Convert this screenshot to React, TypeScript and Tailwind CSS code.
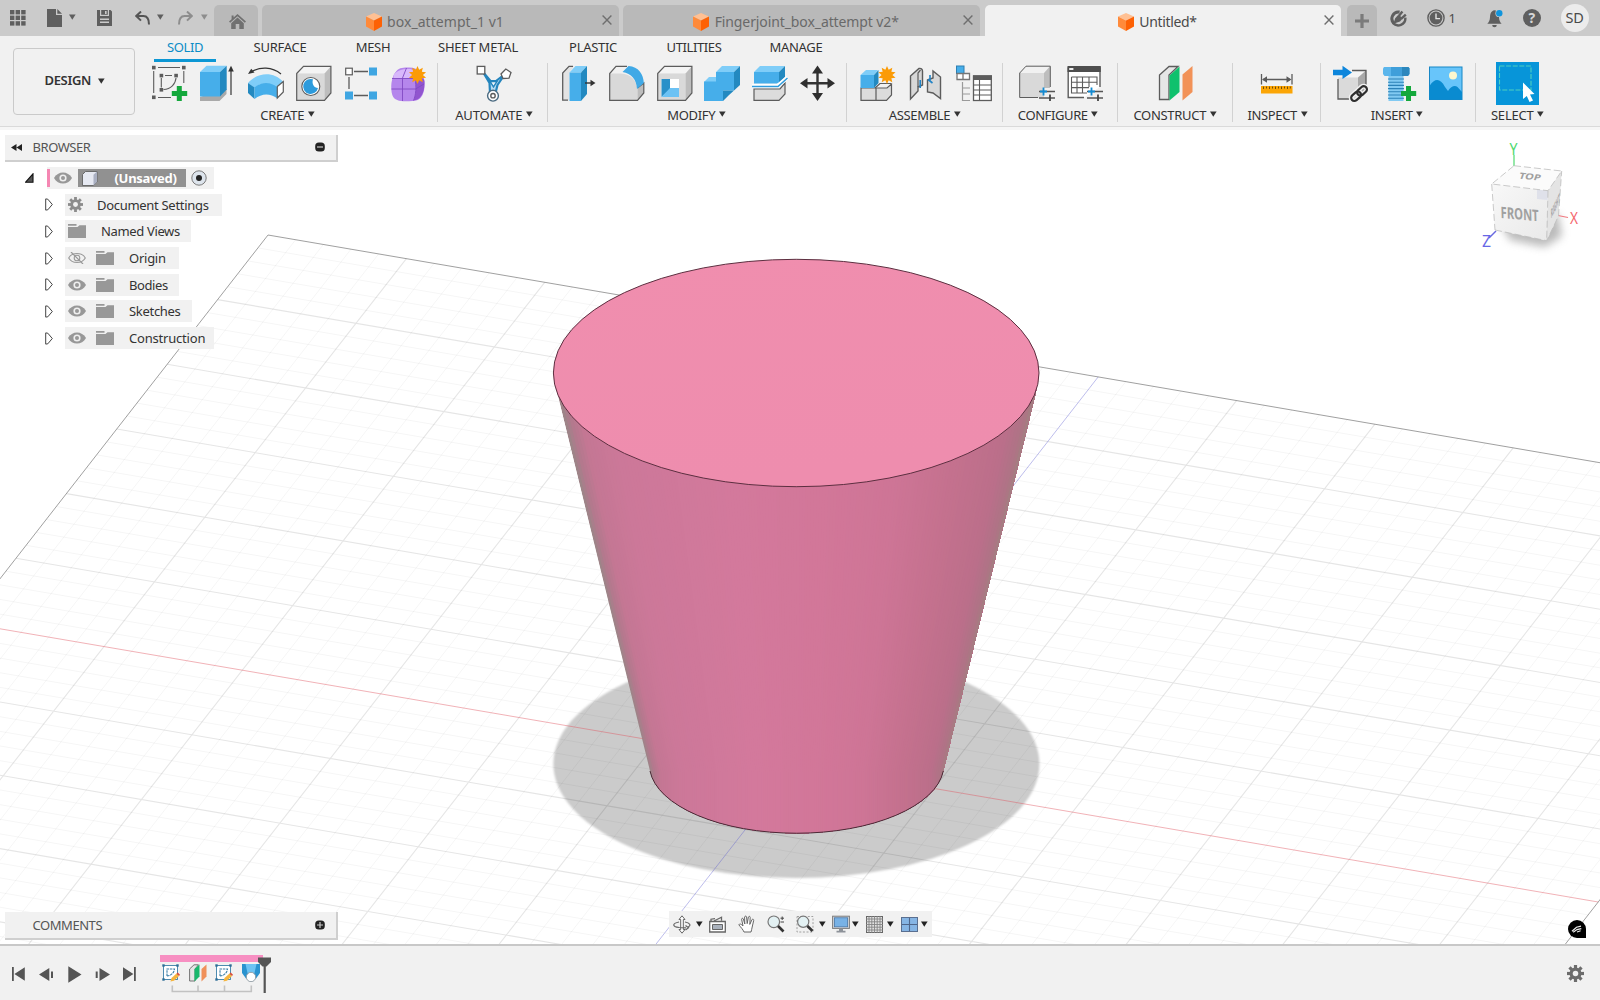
import React from "react";

const FONT = "font-['Noto_Sans','Open_Sans',sans-serif]";

/* ---------- small shared pieces ---------- */

function Caret({ className = "" }: { className?: string }) {
  return (
    <svg className={`shrink-0 ${className}`} width="7" height="6" viewBox="0 0 7 6">
      <path d="M0 0.4h6.6L3.3 5.7z" fill="currentColor" />
    </svg>
  );
}

function CloseMark() {
  return (
    <svg className="shrink-0" width="10" height="10" viewBox="0 0 10 10">
      <path d="M0.6 0.6l8.8 8.8M9.4 0.6l-8.8 8.8" stroke="#6f6f6f" strokeWidth="1.4" fill="none" />
    </svg>
  );
}

function OrangeCube() {
  return (
    <svg className="shrink-0" width="16" height="18" viewBox="0 0 16 18">
      <path d="M8 0L16 3.6L8 7.6L0 3.6z" fill="#ffc093" />
      <path d="M0 3.6L8 7.6V18L0 13.6z" fill="#ff8a3a" />
      <path d="M16 3.6L8 7.6V18L16 13.6z" fill="#fd6104" />
    </svg>
  );
}

function Gear({ size, color, hole }: { size: number; color: string; hole: string }) {
  return (
    <svg className="shrink-0" width={size} height={size} viewBox="0 0 16 16">
      <g fill={color}>
        {[0, 45, 90, 135].map((a) => (
          <rect key={a} x="6.5" y="0" width="3" height="16" transform={`rotate(${a} 8 8)`} />
        ))}
        <circle cx="8" cy="8" r="5.6" />
      </g>
      <circle cx="8" cy="8" r="2.6" fill={hole} />
    </svg>
  );
}

/* ---------- title bar ---------- */

function DocTab({ label, width, active, tracking }: { label: string; width: string; active?: boolean; tracking: string }) {
  return (
    <div
      className={`relative flex h-[31.5px] shrink-0 items-center justify-center rounded-t-[5px] ${width} ${
        active ? "bg-[#f1f1f1] text-[#4a4a4a]" : "bg-[#b9b9b9] text-[#696969]"
      }`}
    >
      <div className="flex items-center gap-[5.5px] pr-[11px] pt-[3px]">
        <OrangeCube />
        <span className={`whitespace-nowrap text-[14px] leading-5 ${tracking}`}>{label}</span>
      </div>
      <div className="absolute right-[7px] top-[10.5px]">
        <CloseMark />
      </div>
    </div>
  );
}

function TitleBar() {
  return (
    <div className="flex h-9 shrink-0 items-end bg-[#cbcbcb] text-[#5f5f5f]">
      <div className="flex h-9 w-[214px] shrink-0 items-center pl-[10px]">
        <svg width="16" height="16" viewBox="0 0 16 16" fill="#5f5f5f">
          {[0, 5.6, 11.2].map((x) => [0, 5.6, 11.2].map((y) => <rect key={`${x}-${y}`} x={x} y={y} width="4.4" height="4.4" />))}
        </svg>
        <svg className="ml-[21px]" width="15" height="18" viewBox="0 0 15 18">
          <path d="M0 0h9v6h6v12H0zM10.3 0L15 4.8h-4.7z" fill="#5f5f5f" />
        </svg>
        <Caret className="ml-[7px] -mt-0.5" />
        <svg className="ml-[21px]" width="15" height="16" viewBox="0 0 15 16">
          <path d="M0 0h3v6h9V0h1.5L15 1.5V16H0z" fill="#5f5f5f" />
          <path d="M4.2 0h6.6v4.8H4.2z" fill="#5f5f5f" />
          <path d="M8 1h1.6v3H8zM3 8.6h9V10H3zM3 11.5h9V13H3z" fill="#cbcbcb" />
        </svg>
        <svg className="ml-[22.5px]" width="15" height="14" viewBox="0 0 15 14">
          <path d="M6 0.5L1.3 5L6 9.6M1.3 5H8.5C12.5 5 14 7.5 14 13.5" fill="none" stroke="#555" strokeWidth="2" />
        </svg>
        <Caret className="ml-[7px] -mt-0.5" />
        <svg className="ml-[14px]" width="15" height="14" viewBox="0 0 15 14">
          <path d="M9 0.5L13.7 5L9 9.6M13.7 5H6.5C2.5 5 1 7.5 1 13.5" fill="none" stroke="#8d8d8d" strokeWidth="2" />
        </svg>
        <Caret className="ml-[8px] -mt-0.5 text-[#8d8d8d]" />
      </div>
      <div className="flex h-[31.5px] w-[43.5px] shrink-0 items-center justify-center rounded-t-[5px] bg-[#b9b9b9] pl-[4px] pt-[3px]">
        <svg width="17" height="15" viewBox="0 0 17 15">
          <path d="M8.5 0L17 7.6L15.8 8.8L8.5 2.3L1.2 8.8L0 7.6L2.6 5.2V1.5h2v2z" fill="#707070" />
          <path d="M8.5 3.6L14.8 9.2V15H10.3V10H6.7V15H2.2V9.2z" fill="#707070" />
        </svg>
      </div>
      <div className="ml-[4.5px] flex gap-[4.5px]">
        <DocTab label="box_attempt_1 v1" width="w-[356.5px]" tracking="tracking-[0.05px]" />
        <DocTab label="Fingerjoint_box_attempt v2*" width="w-[357px]" tracking="tracking-[-0.1px]" />
        <DocTab label="Untitled*" width="w-[356.5px]" tracking="tracking-[-0.35px]" active />
      </div>
      <div className="ml-[6px] flex h-[31px] w-[30px] shrink-0 items-center justify-center rounded-t-[5px] bg-[#b9b9b9]">
        <svg width="14" height="14" viewBox="0 0 14 14">
          <path d="M7 0v14M0 7h14" stroke="#7b7b7b" strokeWidth="3.2" />
        </svg>
      </div>
      <div className="flex h-9 flex-1 items-center pl-[13px]">
        <svg width="17" height="17" viewBox="0 0 17 17">
          <path d="M9.6 2.1A6.6 6.6 0 0 0 4 13.4" fill="none" stroke="#5f5f5f" strokeWidth="3" />
          <path d="M2.8 12.6A7 7 0 0 0 15.3 7.6" fill="none" stroke="#5f5f5f" strokeWidth="2.4" />
          <path d="M3.6 13.2L5.2 8.2L7.6 5.4C9 4.6 11.8 6.6 12.2 9L10 11.6L5.6 13z" fill="#5f5f5f" />
          <path d="M8.8 6L12.4 1.6M11.4 8.6L15.8 4.6" stroke="#5f5f5f" strokeWidth="2.4" />
        </svg>
        <svg className="ml-[19.5px]" width="18" height="18" viewBox="0 0 18 18">
          <circle cx="9" cy="9" r="8.1" fill="none" stroke="#5f5f5f" strokeWidth="1.4" />
          <circle cx="9" cy="9" r="6.4" fill="#5f5f5f" />
          <path d="M9 4.6V9.6H13" stroke="#e2e2e2" strokeWidth="1.4" fill="none" />
        </svg>
        <span className="ml-[4px] w-[7px] text-[13px] leading-5 text-[#4c4c4c]">1</span>
        <svg className="ml-[31.5px]" width="17" height="19" viewBox="0 0 17 19">
          <path d="M7.5 1.2C3.8 1.8 3.2 5 3 8.2C2.8 11.5 2 13 0.3 14.8H14.6C13 13 12.2 11.5 12 8.2C11.8 5 11.2 1.8 7.5 1.2z" fill="#5f5f5f" />
          <path d="M5.2 16h4.6a2.3 2.3 0 0 1-4.6 0z" fill="#5f5f5f" />
          <circle cx="12.3" cy="4.2" r="3.9" fill="#cbcbcb" />
          <circle cx="12.3" cy="4.2" r="3.2" fill="#0f94dc" />
        </svg>
        <div className="ml-[19px] flex size-[17.5px] items-center justify-center rounded-full bg-[#5f5f5f] text-[14px] font-bold leading-none text-[#d6d6d6]">?</div>
        <div className="ml-[20px] -mt-px flex size-[28px] items-center justify-center rounded-full bg-[#ececec] text-[14.5px] tracking-[-0.2px] text-[#4a4a4a]">SD</div>
      </div>
    </div>
  );
}

/* ---------- ribbon icons ---------- */

const G = "#5c5c5c";
const B = "#46aeea";
const BD = "#2389c0";
const BL = "#7fcdf8";

function Ico({ children }: { children: React.ReactNode }) {
  return (
    <svg width="36" height="37" viewBox="0 0 36 37" className="shrink-0 overflow-visible">
      {children}
    </svg>
  );
}

function GreyBlock() {
  return (
    <>
      <path d="M0.7 8.5L7.5 1.5H34.5L28.5 8.5z" fill="#f4f4f4" />
      <path d="M0.7 8.5H28.5V35.3H0.7z" fill="#d9d9d9" />
      <path d="M28.5 8.5L34.8 1.5V28L28.5 35.3z" fill="#bdbdbd" />
      <path d="M0.7 8.5L7.5 1.3H34.9V28L28.5 35.4H0.7z" fill="none" stroke={G} strokeWidth="1.2" />
    </>
  );
}

function Burst({ x, y, r }: { x: number; y: number; r: number }) {
  const pts = Array.from({ length: 20 }, (_, i) => {
    const a = (i * Math.PI) / 10;
    const d = i % 2 ? r * 0.6 : r;
    return `${x + Math.sin(a) * d},${y - Math.cos(a) * d}`;
  }).join(" ");
  return <polygon points={pts} fill="#fb9b06" />;
}

const SketchIcon = () => (
  <Ico>
    <g fill="none" stroke={G} strokeWidth="1.1">
      <path d="M6 2.5H28M1.7 6V28M31.8 6V18M6 32.5H19" />
      <path d="M9.3 13V22.5M13 10.5H20M24 13C23.5 19 19 24 11.5 24.5" />
    </g>
    {[[0, 0.8], [30, 0.8], [0, 30.5], [7.6, 8.8], [22.3, 8.8], [7.6, 23]].map(([x, y]) => (
      <rect key={`${x}-${y}`} x={x} y={y} width="3.6" height="3.6" fill={G} />
    ))}
    <path d="M24.8 21h5v5h5.4v5h-5.4v5h-5v-5h-5v-5h5z" fill="#14a83c" />
  </Ico>
);

const ExtrudeIcon = () => (
  <Ico>
    <path d="M0 32L3 31H19L26.5 24V29L19.5 36H0z" fill="#a9a9a9" />
    <path d="M0 7L6.5 0.8H26.7L20 7z" fill={BL} />
    <path d="M0 7H20V31.5H0z" fill={B} />
    <path d="M20 7L26.7 0.8V24.5L20 31.5z" fill={BD} />
    <path d="M31 6V30" stroke="#444" strokeWidth="1.3" />
    <path d="M31 0.8L33.8 6.5H28.2z" fill="#333" />
  </Ico>
);

const RevolveIcon = () => (
  <Ico>
    <path d="M3 7C12 1.5 24 1.5 33 9" fill="none" stroke="#333" strokeWidth="1.2" />
    <path d="M0 9L3.2 3.8L6.5 7.5z" fill="#333" />
    <path d="M0 18C10 6.5 26 6.5 35.5 17L29.5 23.5C22 17 13 17 6.5 23z" fill={BL} />
    <path d="M0 18L6.5 22.5V34L0 28z" fill={BD} />
    <path d="M6.5 22.5C13 16.5 23 16.5 29.5 22.5V33.5C22 28 14 28 6.5 34z" fill={B} />
    <path d="M29.3 21.5L35.3 16.5V27L29.3 33z" fill="#fff" stroke={G} strokeWidth="1.2" />
  </Ico>
);

const HoleIcon = () => (
  <Ico>
    <GreyBlock />
    <circle cx="14.8" cy="21.5" r="9" fill="#fff" stroke={G} strokeWidth="1.1" />
    <path d="M17 14.3A7.5 7.5 0 1 0 22 23C18 23 15.5 19 17 14.3z" fill="#2d9bdc" />
  </Ico>
);

const PatternIcon = () => (
  <Ico>
    <path d="M10 6.5H24M10 30.5H24M5 12V24" stroke={G} strokeWidth="1.3" />
    <rect x="1.7" y="3.2" width="6.6" height="6.6" fill="#fff" stroke={G} strokeWidth="1.2" />
    <rect x="25" y="2.5" width="8" height="8" fill="#3fa6e2" />
    <rect x="25" y="26.5" width="8" height="8" fill="#3fa6e2" />
    <rect x="1" y="26.5" width="8" height="8" fill="#3fa6e2" />
  </Ico>
);

const FormIcon = () => (
  <Ico>
    <g transform="translate(-1.5 0)">
      <path d="M6 6C9 2.5 13 2.5 19 2.5C27 2.5 33 8 34 16C34.5 25 33 36 22 36C13 36.5 4 37 1.8 30C0 24 0 12 6 6z" fill="#b586ec" />
      <path d="M3 10C8 4 14 4 20 4C24 5 26 8 24 13C18 13 10 13 3 14z" fill="#d8b8fb" />
      <path d="M25 14C33 12 34 14 34 18C34 28 30 35 23 35.5C26 30 26 20 25 14z" fill="#9155cf" />
      <path d="M1 24H25L33.5 19M12 13V36M1.5 13.5H24.5M24.5 13.5C26 22 25.5 30 23 35.5M12 13L16 3" fill="none" stroke="#8149c4" strokeWidth="0.9" />
      <Burst x={27} y={10} r={9} />
    </g>
  </Ico>
);

const AutomateIcon = () => (
  <Ico>
    <path d="M7 7L14.5 16L20 16L29 9L21.5 20L19.5 28H14L13.5 18z" fill="#b7dcf3" stroke="#2585bd" strokeWidth="2.2" strokeLinejoin="round" />
    <path d="M14 16.5H21L17.5 22z" fill="#eef6fb" stroke="#2585bd" strokeWidth="1.4" />
    <rect x="1.2" y="1.4" width="7.6" height="7.6" fill="#fff" stroke={G} strokeWidth="1.3" />
    <path d="M25 9L29.8 4L35 7.4L33 13.2L27 13.5z" fill="#fff" stroke={G} strokeWidth="1.3" />
    <circle cx="17" cy="30.7" r="5.4" fill="#fff" stroke="#4a6a80" strokeWidth="1.4" />
    <circle cx="17" cy="30.7" r="2.2" fill="#fff" stroke={G} strokeWidth="1.4" />
  </Ico>
);

const PressPullIcon = () => (
  <Ico>
    <path d="M1.7 8L8 1.5H13L8 8V35.2H1.7z" fill="#e3e3e3" />
    <path d="M7 35.2H1.7V8L8 1.4H12" fill="none" stroke={G} strokeWidth="1.3" />
    <path d="M8.5 7.5L14.5 1H26L20 7.5z" fill={BL} />
    <path d="M8.5 7.5H20V36H8.5z" fill={B} />
    <path d="M20 7.5L26 1V29L20 36z" fill={BD} />
    <path d="M24 18H31" stroke="#333" strokeWidth="1.4" />
    <path d="M29.5 14.7L34.5 18L29.5 21.3z" fill="#333" />
  </Ico>
);

const FilletIcon = () => (
  <Ico>
    <path d="M0.7 8.5L7 1.5H17C29 5 34.5 14 34.8 20V28L28.5 35.3H0.7z" fill="#f1f1f1" />
    <path d="M0.7 8.5H12C22 9 28 16 28.5 25V35.3H0.7z" fill="#d9d9d9" />
    <path d="M28.5 24L34.8 17V28L28.5 35.3z" fill="#bdbdbd" />
    <path d="M18 1.3H7L0.7 8.5V35.3H28.5L34.8 28V18L28.5 23" fill="none" stroke={G} strokeWidth="1.2" />
    <path d="M13.5 7L19.5 1C29.5 1.5 34.5 9.5 34.8 18L28 24C27.5 14.5 22.5 8.5 13.5 7z" fill="#40a9e6" />
  </Ico>
);

const ShellIcon = () => (
  <Ico>
    <GreyBlock />
    <rect x="4.5" y="14" width="17.5" height="18" fill="#fff" />
    <path d="M4.5 14H13V24L4.5 32z" fill="#2a90c9" />
    <path d="M13 23H22V32H4.5z" fill="#6cc2f4" />
  </Ico>
);

const CombineIcon = () => (
  <Ico>
    <path d="M12 7L18 1H36L30 7zM0 17L5 12H12V17z" fill={BL} />
    <path d="M12 7H30V25.5H19V36H0V16.5H12z" fill={B} />
    <path d="M30 7L36 1V20L30 25.5zM19 25.5H30L24.5 30.5L19 36z" fill={BD} />
  </Ico>
);

const SplitIcon = () => (
  <Ico>
    <path d="M2 24H28L33 18V29L27 35.3H2z" fill="#dcdcdc" stroke={G} strokeWidth="1.2" />
    <path d="M2 7L8 1H33L27 7z" fill={BL} />
    <path d="M2 7H27V18.5H2z" fill={B} />
    <path d="M27 7L33 1V12L27 18.5z" fill={BD} />
    <path d="M0 21H25.5L35.5 12.5" fill="none" stroke="#fff" strokeWidth="4" />
    <path d="M0 21.5H26L35.5 13" fill="none" stroke="#2d9bdc" strokeWidth="1.5" />
  </Ico>
);

const MoveIcon = () => (
  <Ico>
    <path d="M17.5 6V30M6 18.3H29" stroke="#333" strokeWidth="2.4" />
    <path d="M17.5 0.5L23 8.5H12zM17.5 36L12 28H23zM0 18.3L7.5 13V23.5zM35 18.3L27.5 13V23.5z" fill="#2f2f2f" />
  </Ico>
);

const NewComponentIcon = () => (
  <Ico>
    <path d="M1 23H16V35.3H1zM16 23H27L31.5 19V30L26.5 35.3H16z" fill="#dcdcdc" stroke={G} strokeWidth="1.2" />
    <path d="M15 23L20 18.5H31" fill="none" stroke={G} strokeWidth="1.2" />
    <path d="M0.5 10L6 5H18L14 10z" fill={BL} />
    <path d="M0.5 10H14V23H0.5z" fill={B} />
    <path d="M14 10L18.5 5V18L14 23z" fill={BD} />
    <Burst x={27} y={10} r={9} />
  </Ico>
);

const JointIcon = () => (
  <Ico>
    <path d="M2.5 11L11 3.5C13 3 14.5 4 14.5 6V20L10 22V26L2.5 34z" fill="#d8d8d8" stroke={G} strokeWidth="1.4" />
    <path d="M10 22V8L12.5 5" fill="none" stroke={G} strokeWidth="1.2" />
    <path d="M19.5 15L25 13V6L32.5 12V33.5L25 28L19.5 27z" fill="#d8d8d8" stroke={G} strokeWidth="1.4" />
    <path d="M12.2 15V23M22 10V16M20 14.5L24.5 18" stroke="#2384c6" strokeWidth="1.6" />
  </Ico>
);

const BomIcon = () => (
  <Ico>
    <rect x="0.5" y="1" width="7.5" height="7.5" fill={B} stroke="#2d7fb2" />
    <path d="M1 8.5H7V14.5H1zM7 8.5H13.5V14.5H7z" fill="#fff" stroke="#767676" strokeWidth="1.3" />
    <path d="M6.5 17V35.5H14M6.5 23H14M6.5 29H14" fill="none" stroke="#9a9a9a" strokeWidth="1.2" />
    <rect x="17.5" y="11" width="17.8" height="24.5" fill="#fff" stroke={G} strokeWidth="1.3" />
    <path d="M17 10.3H36V15H17z" fill={G} />
    <path d="M17.5 20H35M17.5 25H35M17.5 30H35M23.5 15V35" stroke={G} strokeWidth="1.1" />
  </Ico>
);

function Sliders() {
  return (
    <>
      <path d="M20 26.5H36M20 33H36" stroke="#555" strokeWidth="1.6" />
      <path d="M24.5 22.5V30.5M21 26.5H28" stroke="#138bd3" strokeWidth="1.8" />
      <path d="M31 29.5V36" stroke="#444" strokeWidth="1.8" />
    </>
  );
}

const ConfigureIcon = () => (
  <Ico>
    <path d="M0.7 8L7 1.2H31V22L25 33H0.7z" fill="#f1f1f1" />
    <path d="M0.7 8H25V32.5H0.7z" fill="#d9d9d9" />
    <path d="M25 8L31 1.2V23H25z" fill="#bdbdbd" />
    <path d="M19 32.5H0.7V8L7 1.2H31.3V22" fill="none" stroke={G} strokeWidth="1" />
    <Sliders />
  </Ico>
);

const ConfigTableIcon = () => (
  <Ico>
    <path d="M17 32.5H1.2V3H33V22" fill="#fff" stroke={G} strokeWidth="1.4" />
    <path d="M0.5 1H33.8V7H0.5z" fill="#4e4e4e" />
    <rect x="2.2" y="3" width="4.2" height="2" fill="#eee" />
    <path d="M4.5 12H30V20M4.5 12V28H20M4.5 17.3H30M4.5 22.6H22M10 12V28M15.5 12V28M22 12V22" fill="none" stroke={G} strokeWidth="1.1" />
    <Sliders />
  </Ico>
);

const ConstructIcon = () => (
  <Ico>
    <path d="M1.5 10L11 1.5H20L11 10V34.5H1.5z" fill="#e6e6e6" stroke={G} strokeWidth="1.3" />
    <path d="M11.5 10.5L21.5 1.5V27L11.5 35.5z" fill="#0fc16d" />
    <path d="M24.5 9.5L34.5 1V27L24.5 35.5z" fill="#f29258" />
  </Ico>
);

const InspectIcon = () => (
  <Ico>
    <path d="M2.5 9V19.5M33 9V19.5M4 14.5H31" stroke={G} strokeWidth="1.3" />
    <path d="M3 14.5L8 11.3V17.7zM32.5 14.5L27.5 11.3V17.7z" fill={G} />
    <rect x="2" y="21" width="31.5" height="7.5" fill="#fba505" />
    <path d="M4.5 21.5V24M7.5 21.5V23.5M10.5 21.5V24M13.5 21.5V23.5M16.5 21.5V24M19.5 21.5V23.5M22.5 21.5V24M25.5 21.5V23.5M28.5 21.5V24M31.3 21.5V23.5" stroke="#704c0a" strokeWidth="1" />
  </Ico>
);

const InsertDeriveIcon = () => (
  <Ico>
    <path d="M5 12L13 5.5H33L25 12.5z" fill="#f5f5f5" />
    <path d="M5 12.5H25V34H5z" fill="#dadada" />
    <path d="M25 12.5L33 5.5V24L25 34z" fill="#a9a9a9" />
    <path d="M17 34H5V14M19 5.5H33V22" fill="none" stroke={G} strokeWidth="1.3" />
    <path d="M0 4.8H9.5V0.8L19 7.5L9.5 14V10.2H0z" fill="#0d86dc" />
    <g transform="rotate(-42 26 28.5)" fill="none" stroke="#f1f1f1" strokeWidth="5">
      <rect x="16.5" y="25.4" width="11" height="6.4" rx="3.2" />
      <rect x="24.5" y="25.4" width="11" height="6.4" rx="3.2" />
    </g>
    <g transform="rotate(-42 26 28.5)" fill="none" stroke="#2f2f2f" strokeWidth="2.2">
      <rect x="16.5" y="25.4" width="11" height="6.4" rx="3.2" />
      <rect x="24.5" y="25.4" width="11" height="6.4" rx="3.2" />
    </g>
  </Ico>
);

const FastenerIcon = () => (
  <Ico>
    <g transform="translate(1 0)">
      <path d="M6.5 11H21.5V36H6.5z" fill="#82caf2" />
      <path d="M6 14H22M6 17.2H22M6 20.4H22M6 23.6H22M6 26.8H22M6 30H22M6 33.2H22" stroke="#2c82b8" strokeWidth="1.1" />
      <path d="M2 2H26.5L27.5 3.5V9L26 11H2.5L1 9V3.5z" fill="#5bb6ec" />
      <path d="M20 2H26.5L27.5 3.5V9L26 11H20z" fill="#2b87bd" />
      <path d="M9 2H20V11H9z" fill="#3f9fda" />
      <path d="M24 21h5v5h5.2v5H29v5h-5v-5h-5v-5h5z" fill="#14a83c" />
    </g>
  </Ico>
);

const CanvasIcon = () => (
  <Ico>
    <rect x="1.5" y="2" width="32.5" height="32.5" fill="#68c5fa" stroke="#1787c6" strokeWidth="1" />
    <circle cx="25" cy="10.5" r="4" fill="#fdf8cf" />
    <path d="M1.5 21C7 13 12 13 17 22L20 26C23 21 27 20 29.5 22L34 27V34.5H1.5z" fill="#0a8bd0" />
  </Ico>
);

const SelectIcon = () => (
  <svg width="43" height="43" viewBox="0 0 43 43" className="-my-[3px] shrink-0">
    <rect width="43" height="43" fill="#0795d9" />
    <rect x="3.5" y="4" width="31.5" height="24" fill="none" stroke="#4fd0c0" strokeWidth="1.1" strokeDasharray="5 1.6" />
    <path d="M27 20.5L38.5 32L34 32.5L37 38.5L33.5 40L30.8 34L27 37z" fill="#fff" />
  </svg>
);

/* ---------- ribbon ---------- */

type GroupDef = { label: string; width: string; icons: React.FC[]; shift: string; tracking: string; last?: boolean };

const GROUPS: GroupDef[] = [
  { label: "CREATE", width: "w-[297px]", icons: [SketchIcon, ExtrudeIcon, RevolveIcon, HoleIcon, PatternIcon, FormIcon], shift: "pl-[2px]", tracking: "tracking-[-0.2px] pr-[3px]" },
  { label: "AUTOMATE", width: "w-[110px]", icons: [AutomateIcon], shift: "pl-[2px]", tracking: "tracking-[-0.2px] pl-[3px]" },
  { label: "MODIFY", width: "w-[299px]", icons: [PressPullIcon, FilletIcon, ShellIcon, CombineIcon, SplitIcon, MoveIcon], shift: "pl-[3px]", tracking: "tracking-[-0.3px] pr-[1px]" },
  { label: "ASSEMBLE", width: "w-[155.5px]", icons: [NewComponentIcon, JointIcon, BomIcon], shift: "pl-[3px]", tracking: "tracking-[-0.35px] pl-[1px]" },
  { label: "CONFIGURE", width: "w-[115px]", icons: [ConfigureIcon, ConfigTableIcon], shift: "pl-[3px]", tracking: "tracking-[-0.4px] pr-[3px]" },
  { label: "CONSTRUCT", width: "w-[115px]", icons: [ConstructIcon], shift: "pl-[2px]", tracking: "tracking-[-0.3px] pl-[1px]" },
  { label: "INSPECT", width: "w-[88px]", icons: [InspectIcon], shift: "pl-[1px]", tracking: "tracking-[-0.35px] pl-[3px]" },
  { label: "INSERT", width: "w-[155px]", icons: [InsertDeriveIcon, FastenerIcon, CanvasIcon], shift: "pl-[2px]", tracking: "tracking-[-0.35px] pr-[1px]" },
  { label: "SELECT", width: "w-[83px]", icons: [SelectIcon], shift: "", tracking: "tracking-[-0.2px] pl-[1px]", last: true },
];

const RIBBON_TABS = [
  { label: "SOLID", width: "w-[62px]", ml: "", active: true, tracking: "tracking-[-0.4px]" },
  { label: "SURFACE", width: "w-[62px]", ml: "ml-[33px]", tracking: "tracking-[-0.25px]" },
  { label: "MESH", width: "w-[42px]", ml: "ml-[41px]", tracking: "tracking-[-0.3px]" },
  { label: "SHEET METAL", width: "w-[90px]", ml: "ml-[39px]", tracking: "tracking-[-0.2px]" },
  { label: "PLASTIC", width: "w-[58px]", ml: "ml-[41px]", tracking: "tracking-[-0.3px]" },
  { label: "UTILITIES", width: "w-[64px]", ml: "ml-[40px]", tracking: "tracking-[-0.4px]" },
  { label: "MANAGE", width: "w-[62px]", ml: "ml-[39px]", tracking: "tracking-[-0.3px]" },
];

function Ribbon() {
  return (
    <div className="flex h-[91px] shrink-0 border-b border-[#dadada] bg-[#f1f1f1] text-[#333]">
      <div className="ml-[13px] mt-[11.5px] flex h-[67px] w-[121.5px] shrink-0 items-center justify-center gap-[7px] rounded-[4px] border border-[#cacaca] pl-[2px]">
        <span className="text-[13px] font-semibold tracking-[-0.35px]">DESIGN</span>
        <Caret />
      </div>
      <div className="flex flex-1 flex-col">
        <div className="flex h-[27px] pl-[19.5px]">
          {RIBBON_TABS.map((t) => (
            <div
              key={t.label}
              className={`flex h-[26px] shrink-0 items-start justify-center whitespace-nowrap pt-[1.4px] text-[13px] leading-5 ${t.tracking} ${t.width} ${t.ml} ${
                t.active ? "border-b-[3.5px] border-[#0c97d4] text-[#0b8cc6]" : ""
              }`}
            >
              {t.label}
            </div>
          ))}
        </div>
        <div className="flex pl-[6.5px]">
          {GROUPS.map((g) => (
            <div key={g.label} className={`flex h-[59px] shrink-0 flex-col items-center pt-[2px] ${g.width} ${g.last ? "" : "border-r border-[#d2d2d2]"}`}>
              <div className={`flex h-[37px] items-center gap-[11.9px] ${g.shift}`}>
                {g.icons.map((I, i) => (
                  <I key={i} />
                ))}
              </div>
              <div className={`mt-[2.5px] flex h-5 items-center gap-[3.5px] text-[13px] leading-5 ${g.tracking}`}>
                {g.label}
                <Caret className="-mt-0.5" />
              </div>
            </div>
          ))}
        </div>
      </div>
    </div>
  );
}

/* ---------- 3D scene ---------- */

const O = [268, 235];
const U = [138.36, 23.65];
const V = [-50.4, 64.65];
const COLS = 59;
const ROWS = 60;
const pt = (i: number, j: number) => [O[0] + (U[0] * i) / 5 + (V[0] * j) / 5, O[1] + (U[1] * i) / 5 + (V[1] * j) / 5];

function seg(a: number[], b: number[]) {
  return `M${a[0].toFixed(1)} ${a[1].toFixed(1)}L${b[0].toFixed(1)} ${b[1].toFixed(1)}`;
}

const STOPS: [number, number[]][] = [
  [0, [158, 132, 136]],
  [0.012, [178, 121, 141]],
  [0.035, [196, 119, 148]],
  [0.1, [204, 120, 153]],
  [0.35, [211, 121, 156]],
  [0.55, [210, 119, 153]],
  [0.72, [206, 117, 150]],
  [0.85, [196, 113, 142]],
  [0.95, [187, 111, 138]],
  [0.985, [174, 116, 133]],
  [1, [158, 132, 128]],
];

function sideColor(t: number) {
  for (let i = 1; i < STOPS.length; i++) {
    const [t1, c1] = STOPS[i];
    if (t <= t1) {
      const [t0, c0] = STOPS[i - 1];
      const f = (t - t0) / (t1 - t0);
      return `rgb(${c0.map((v, k) => Math.round(v + (c1[k] - v) * f)).join(",")})`;
    }
  }
  return "rgb(158,132,128)";
}

function Scene() {
  const minor: string[] = [];
  const major: string[] = [];
  for (let i = 1; i < COLS; i++) (i % 5 ? minor : major).push(i === 30 ? "" : seg(pt(i, 0), pt(i, ROWS)));
  for (let j = 1; j < ROWS; j++) (j % 5 ? minor : major).push(j === 30 ? "" : seg(pt(0, j), pt(COLS, j)));
  const n = 150;
  const strips = Array.from({ length: n }, (_, i) => {
    const t = i / n;
    const tx = 557.5 + t * (1035.5 - 557.5);
    const bx = 649.5 + t * (943.8 - 649.5);
    return <polygon key={i} points={`${tx},394 ${tx},370 1041,370 1037,394 945,772 945,840 ${bx},840 ${bx},772`} fill={sideColor(t)} />;
  });
  return (
    <svg className="absolute inset-0 size-full" viewBox="0 127 1600 817" preserveAspectRatio="none">
      <defs>
        <filter id="soft" x="-5%" y="-5%" width="110%" height="110%">
          <feGaussianBlur stdDeviation="1.1" />
        </filter>
        <filter id="cubeShadow" x="-50%" y="-50%" width="200%" height="200%">
          <feGaussianBlur stdDeviation="4" />
        </filter>
        <clipPath id="wall">
          <path d="M557.5 394L553.6 373L796 360L1038.8 373L1035.5 394L943.3 771A147.3 68.7 0 0 1 650 771z" />
        </clipPath>
        <linearGradient id="topFace" x1="0" y1="0" x2="0.3" y2="1">
          <stop offset="0" stopColor="#f08eae" />
          <stop offset="1" stopColor="#ee8dae" />
        </linearGradient>
        <linearGradient id="frontFace" x1="0" y1="0" x2="1" y2="1">
          <stop offset="0" stopColor="#f8f8f8" />
          <stop offset="1" stopColor="#e9e9e9" />
        </linearGradient>
      </defs>

      <rect y="127" width="1600" height="817" fill="#fff" />
      <rect y="127" width="1600" height="3" fill="#f6f6f6" />
      <ellipse cx="796.4" cy="764" rx="243" ry="114" fill="#cbcbcb" filter="url(#soft)" />
      <path d={minor.join("")} stroke="#000" strokeOpacity="0.04" strokeWidth="1" fill="none" />
      <path d={major.join("")} stroke="#000" strokeOpacity="0.1" strokeWidth="1.1" fill="none" />
      <path d={seg(pt(0, 30), pt(COLS, 30))} stroke="#e0555f" strokeOpacity="0.45" strokeWidth="1" />
      <path d={seg(pt(30, 0), pt(30, ROWS))} stroke="#5a5ad0" strokeOpacity="0.4" strokeWidth="1" />
      <path d={seg(pt(0, ROWS), pt(0, 0)) + seg(pt(0, 0), pt(COLS, 0)) + seg(pt(COLS, 0), pt(COLS, ROWS))} stroke="#777" strokeOpacity="0.7" strokeWidth="1" fill="none" />

      <g clipPath="url(#wall)">{strips}</g>
      <path d="M650 771A147.3 68.7 0 0 0 943.3 771" fill="none" stroke="#4a2a36" strokeWidth="1" />
      <ellipse cx="796.2" cy="373" rx="242.8" ry="113.7" fill="url(#topFace)" stroke="#5c2f40" strokeWidth="1" />

      <path d="M1500 222L1558 214L1562 236L1545 247L1510 240z" fill="#777" opacity="0.5" filter="url(#cubeShadow)" />
      <path d="M1514 155V166" stroke="#4fd96f" strokeWidth="1.2" />
      <path d="M1558 215.5L1568 217.5" stroke="#f07a80" strokeWidth="1.2" />
      <path d="M1496 231L1489 238" stroke="#6868e0" strokeWidth="1.4" />
      <path d="M1514 165.7L1561.7 171L1548 190.7L1491.7 184z" fill="#fbfbfb" />
      <path d="M1491.7 184L1548 190.7L1546.7 240.7L1495 230z" fill="url(#frontFace)" />
      <path d="M1561.7 171L1548 190.7L1546.7 240.7L1558.5 216z" fill="#e4e4e4" />
      <path d="M1537 189.5L1548 190.8L1547.6 200L1537 199z" fill="#dfe1ea" />
      <path
        d="M1514 165.7L1561.7 171L1548 190.7L1491.7 184zM1495 230L1546.7 240.7L1558.5 216L1561.7 171M1491.7 184L1495 230M1548 190.7L1546.7 240.7"
        fill="none"
        stroke="#bcbcbc"
        strokeWidth="0.8"
        strokeDasharray="7 3"
      />
      <g fontFamily="'Noto Sans', sans-serif" textAnchor="middle" fontWeight="700">
        <text x="0" y="0" fontSize="15" fill="#a0a0a0" textLength="38" lengthAdjust="spacingAndGlyphs" transform="matrix(1 0.09 0.03 1.05 1519.8 219.6)">FRONT</text>
        <text x="0" y="0" fontSize="11.5" fill="#a0a0a0" textLength="21.5" lengthAdjust="spacingAndGlyphs" transform="matrix(1 0.1 -0.25 0.72 1529 179.5)">TOP</text>
        <text x="0" y="0" fontSize="12" fill="#a0a0a0" textLength="22" lengthAdjust="spacingAndGlyphs" transform="matrix(0.4 -0.8 0.02 1 1555.5 210)">RIGHT</text>
      </g>
      <g fontFamily="'Noto Sans', sans-serif" textAnchor="middle">
        <text x="1513.5" y="155" fontSize="16" fill="#4fd96f" textLength="8" lengthAdjust="spacingAndGlyphs">Y</text>
        <text x="1574" y="224" fontSize="16" fill="#f5686e" textLength="8" lengthAdjust="spacingAndGlyphs">X</text>
        <text x="1486.5" y="247" fontSize="16" fill="#6767e6" textLength="9" lengthAdjust="spacingAndGlyphs">Z</text>
      </g>
    </svg>
  );
}

/* ---------- browser tree ---------- */

function Eye({ off }: { off?: boolean }) {
  return (
    <svg className="shrink-0" width="18" height="12" viewBox="0 0 18 12">
      {off ? (
        <>
          <path d="M0.7 6C4 0 14 0 17.3 6C14 12 4 12 0.7 6z" fill="none" stroke="#9a9a9a" strokeWidth="1.1" />
          <circle cx="9" cy="6" r="2.8" fill="none" stroke="#9a9a9a" strokeWidth="1.1" />
          <path d="M3 0L15 12" stroke="#9a9a9a" strokeWidth="1.2" />
        </>
      ) : (
        <>
          <path d="M0 6C4-1.4 14-1.4 18 6C14 13.4 4 13.4 0 6z" fill="#989898" />
          <circle cx="9" cy="6" r="3.6" fill="#efefef" />
          <circle cx="9" cy="6" r="2" fill="#989898" />
        </>
      )}
    </svg>
  );
}

function Folder() {
  return (
    <svg className="shrink-0" width="18" height="14" viewBox="0 0 18 14">
      <path d="M0 0h8.5v1.8H0zM0 3H9.5L11.5 1.2H18V14H0z" fill="#989898" />
    </svg>
  );
}

const TREE: { label: string; width: string; kind: "gear" | "folder" | "eye" | "off"; tracking: string }[] = [
  { label: "Document Settings", width: "w-[157px]", kind: "gear", tracking: "tracking-[-0.3px]" },
  { label: "Named Views", width: "w-[126px]", kind: "folder", tracking: "tracking-[-0.35px]" },
  { label: "Origin", width: "w-[114px]", kind: "off", tracking: "tracking-[-0.25px]" },
  { label: "Bodies", width: "w-[114px]", kind: "eye", tracking: "tracking-[-0.4px]" },
  { label: "Sketches", width: "w-[127px]", kind: "eye", tracking: "tracking-[-0.3px]" },
  { label: "Construction", width: "w-[149px]", kind: "eye", tracking: "tracking-[-0.2px]" },
];

function PanelHeader({ title, arrows, plus, tracking }: { title: string; arrows?: boolean; plus?: boolean; tracking: string }) {
  return (
    <div className="flex h-[27.5px] w-[333px] items-center border-b-2 border-r-2 border-[#cfcfcf] bg-[#f1f1f1] pl-[5.5px] pr-[11px] text-[#555]">
      <svg className={arrows ? "" : "invisible"} width="11" height="7" viewBox="0 0 11 7">
        <path d="M5.5 0V7L0 3.5zM11 0V7L5.5 3.5z" fill="#222" />
      </svg>
      <span className={`ml-[11px] flex-1 text-[13px] leading-5 ${tracking}`}>{title}</span>
      <svg width="10" height="10" viewBox="0 0 10 10">
        <rect x="0.2" y="0.4" width="9.6" height="9.2" rx="3.6" fill="#222" />
        <path d={plus ? "M2 5h6M5 2v6" : "M2 5h6"} stroke="#ccc" strokeWidth="1.2" />
      </svg>
    </div>
  );
}

function Browser() {
  return (
    <div className="relative flex flex-col pl-[5px] pt-[7.5px] text-[13px] leading-5 text-[#333]">
      <PanelHeader title="BROWSER" arrows tracking="tracking-[-0.45px]" />
      <div className="mt-[5px] flex h-[22px] items-center pl-[19.5px]">
        <svg width="9" height="10" viewBox="0 0 9 10">
          <path d="M8 0.8V9.2H0.6z" fill="#555" stroke="#111" strokeWidth="1.1" />
        </svg>
        <div className="ml-[13px] flex h-[22px] w-[167px] items-center bg-[#f1f1f1]">
          <div className="h-[18px] w-[3px] bg-[#f587b3]" />
          <div className="ml-[4px] flex">
            <Eye />
          </div>
          <div className="ml-[6px] flex h-[18px] w-[108.5px] items-center bg-[#919191]">
            <svg className="ml-[4px] shrink-0" width="16" height="15" viewBox="0 0 16 15">
              <path d="M0.5 3.5L3.5 0.5H15V11L11.5 14.5H0.5z" fill="#e6e9f2" stroke="#555" strokeWidth="0.8" />
              <path d="M11.5 3.8L15 0.5V11L11.5 14.5z" fill="#aab0c2" />
            </svg>
            <span className="ml-[17px] font-bold tracking-[-0.3px] text-white">(Unsaved)</span>
          </div>
          <svg className="ml-[4.5px] shrink-0" width="16" height="16" viewBox="0 0 16 16">
            <circle cx="8" cy="8" r="7.2" fill="#dde4ec" stroke="#7a7a7a" strokeWidth="1" />
            <circle cx="8" cy="8" r="3" fill="#222" />
          </svg>
        </div>
      </div>
      <div className="mt-[4.7px] flex flex-col gap-[4.7px]">
        {TREE.map((r) => (
          <div key={r.label} className="flex h-[22px] items-center pl-[40px]">
            <svg width="8" height="13" viewBox="0 0 8 13">
              <path d="M0.7 0.9L2.8 1.2L7.3 6.5L2.8 11.8L0.7 12.1z" fill="#fff" stroke="#444" strokeWidth="1" />
            </svg>
            <div className={`ml-[12px] flex h-[22px] items-center bg-[#f1f1f1] pl-[3px] ${r.width}`}>
              {r.kind === "gear" && (
                <div className="mr-[14px]">
                  <Gear size={15} color="#8c8c8c" hole="#f1f1f1" />
                </div>
              )}
              {r.kind === "folder" && (
                <div className="mr-[15px]">
                  <Folder />
                </div>
              )}
              {(r.kind === "eye" || r.kind === "off") && (
                <div className="mr-[15px] flex items-center gap-[10px]">
                  <Eye off={r.kind === "off"} />
                  <Folder />
                </div>
              )}
              <span className={`whitespace-nowrap ${r.tracking}`}>{r.label}</span>
            </div>
          </div>
        ))}
      </div>
    </div>
  );
}

/* ---------- navigation bar ---------- */

function NavBar() {
  const s = "#666";
  return (
    <div className="flex h-[26px] w-[263px] items-center bg-[#f1f1f1] pl-[4px] text-[#222]">
      <svg width="18" height="19" viewBox="0 0 18 19" fill="none" stroke={s}>
        <path d="M9 0.8L12 4.5H10.3V14.5H12L9 18.2L6 14.5H7.7V4.5H6z" fill="#fff" />
        <path d="M6 7C-1 8.5-1 11.5 6 12.5L13 12.8M12 7C17 8 18.5 10.5 15 12M12.5 10.5L15.5 12.8L12.5 15" strokeWidth="1.2" />
      </svg>
      <Caret className="ml-[4.5px]" />
      <svg className="ml-[6.5px]" width="17" height="17" viewBox="0 0 17 17" fill="none" stroke={s}>
        <path d="M0.7 5.5H16.3V16H0.7z" fill="#fff" strokeWidth="1.3" />
        <path d="M3.5 8.5H13.5V13.5H3.5z" fill="#aab2bd" />
        <path d="M2 5V3.2L6 2.6M5 5L12.5 1.2V4.8" strokeWidth="1.3" />
      </svg>
      <svg className="ml-[12px]" width="18" height="18" viewBox="0 0 18 18">
        <path d="M6 17C5 14.5 3 12.5 0.8 9.8C1.5 8.5 3 8.8 5 11L3.6 4.2C3.8 3 5 3 5.4 4L6.8 9L6.6 2C7 0.8 8.2 0.8 8.6 2L9.2 8.6L10.4 2C11 1 12.2 1.2 12.2 2.4L11.8 9.4L14 4.6C14.8 3.8 15.9 4.3 15.7 5.4L14.2 12C13.8 14 13.4 15.5 13 17z" fill="#fff" stroke={s} strokeWidth="1" />
      </svg>
      <svg className="ml-[11px]" width="18" height="18" viewBox="0 0 18 18">
        <circle cx="6.8" cy="6.8" r="5.8" fill="#e3f1f3" stroke="#777" strokeWidth="1.2" />
        <path d="M11 11L16.5 16.5" stroke="#333" strokeWidth="2.6" />
        <path d="M13.5 3.2H17M15.2 1.5V5M13.5 7H17" stroke="#444" strokeWidth="1" />
      </svg>
      <svg className="ml-[11px]" width="18" height="18" viewBox="0 0 18 18">
        <rect x="1" y="1.5" width="16" height="15.5" fill="none" stroke="#999" strokeWidth="0.9" strokeDasharray="2 1.6" />
        <circle cx="7.2" cy="6.8" r="5.6" fill="#e3f1f3" stroke="#777" strokeWidth="1.2" />
        <path d="M11.4 11L16.5 16" stroke="#333" strokeWidth="2.6" />
      </svg>
      <Caret className="ml-[5px]" />
      <svg className="ml-[5.5px]" width="18" height="18" viewBox="0 0 18 18">
        <rect x="0.6" y="1.2" width="16.8" height="12.2" fill="#d0d4da" stroke="#7c7c7c" />
        <rect x="2.4" y="2.8" width="13.2" height="9" fill="#78b2e6" stroke="#4a78a8" strokeWidth="0.8" />
        <path d="M7 13.5h4v2.3h2.5v1.7h-9v-1.7H7z" fill="#8d9299" />
      </svg>
      <Caret className="ml-[2.5px]" />
      <svg className="ml-[7px]" width="17" height="17" viewBox="0 0 17 17">
        <rect x="0.5" y="0.5" width="16" height="16" fill="#e2e2e2" stroke="#666" />
        <path d="M3 0V17M5.8 0V17M8.5 0V17M11.2 0V17M14 0V17M0 3H17M0 5.8H17M0 8.5H17M0 11.2H17M0 14H17" stroke="#858585" strokeWidth="0.9" />
      </svg>
      <Caret className="ml-[3.5px]" />
      <svg className="ml-[7px]" width="17" height="15" viewBox="0 0 17 15">
        <rect x="0.5" y="0.5" width="16" height="14" fill="#86b5e4" stroke="#5a6f90" />
        <path d="M8.5 1V14M1 7.5H16" stroke="#4f668a" strokeWidth="1.1" />
      </svg>
      <Caret className="ml-[3px]" />
    </div>
  );
}

/* ---------- timeline ---------- */

function MiniSketch() {
  return (
    <svg width="18" height="18" viewBox="0 0 18 18">
      <rect x="1.5" y="1.5" width="14" height="14" fill="#fff" stroke="#3b7fa8" strokeWidth="0.9" />
      <g fill="#2d6d96">
        <rect x="0.3" y="0.3" width="2.4" height="2.4" />
        <rect x="14.3" y="0.3" width="2.4" height="2.4" />
        <rect x="0.3" y="14.3" width="2.4" height="2.4" />
      </g>
      <path d="M5 12V5H12.5C12 9 9 11.8 5 12z" fill="none" stroke="#3b7fa8" strokeWidth="1.1" strokeDasharray="2.5 0.8" />
      <path d="M8.5 17.5L9.5 14L14.5 9.5L17 12L12 16.8z" fill="#f5b53f" />
      <path d="M14.5 9.5L15.8 8.5L18 10.8L17 12z" fill="#dc4a3a" />
    </svg>
  );
}

function Timeline() {
  return (
    <div className="flex h-[56px] shrink-0 items-start border-t-[2.5px] border-[#c8c8c8] bg-[#f1f1f1]">
      <div className="flex h-[56px] items-center pl-[12px]">
        <svg width="13" height="14" viewBox="0 0 13 14" fill="#555">
          <path d="M0 0h1.8v14H0zM12.8 0.3V13.7L2.4 7z" />
        </svg>
        <svg className="ml-[14px]" width="15" height="13" viewBox="0 0 15 13" fill="#555">
          <path d="M10.3 0V13L0 6.5zM12 3.5h2V10h-2z" />
        </svg>
        <svg className="ml-[14px]" width="14" height="17" viewBox="0 0 14 17" fill="#555">
          <path d="M0.3 0.3V16.7L13.5 8.5z" />
        </svg>
        <svg className="ml-[12.5px]" width="15" height="13" viewBox="0 0 15 13" fill="#555">
          <path d="M4.5 0V13L15 6.5zM0.7 3.5h2V10h-2z" />
        </svg>
        <svg className="ml-[13.5px]" width="13" height="14" viewBox="0 0 13 14" fill="#555">
          <path d="M11 0h1.8v14H11zM0 0.3V13.7L10.4 7z" />
        </svg>
      </div>
      <div className="relative ml-[23.5px] mt-[8.5px] w-[112px]">
        <div className="h-[7px] w-[103px] bg-[#f78fc2]" />
        <div className="flex gap-[8.6px] pl-[2.5px] pt-[2px]">
          <MiniSketch />
          <svg width="18" height="18" viewBox="0 0 18 18">
            <path d="M0.6 5L5 0.8H9.5L6 5V17H0.6z" fill="#e6e6e6" stroke="#666" strokeWidth="0.9" />
            <path d="M5.5 5L10.5 0.5V12.5L5.5 17.5z" fill="#18b86c" />
            <path d="M12.5 5L17.5 0.5V12.5L12.5 17.5z" fill="#f0905a" />
          </svg>
          <MiniSketch />
          <svg width="18" height="18" viewBox="0 0 18 18">
            <path d="M0 0H18V9L14 14.5H4L0 9z" fill="#2a93cf" />
            <path d="M3.5 0H14.5L12.5 9H5.5z" fill="#6cc3f3" />
            <circle cx="9" cy="13" r="4.7" fill="#fff" stroke="#8b979f" strokeWidth="0.9" />
          </svg>
        </div>
        <svg className="mt-[3px]" width="112" height="8" viewBox="0 0 112 8">
          <path d="M12.3 0.5V6.5H91.3V0.5M38 0.5V6.5M64.5 0.5V6.5" fill="none" stroke="#c2c2c2" strokeWidth="1.6" />
        </svg>
        <svg className="absolute left-[98px] top-[2px]" width="13" height="37" viewBox="0 0 13 37">
          <path d="M0 0.5H13V5L8.5 9.5H4.5L0 5z" fill="#555" />
          <path d="M6.7 6V36" stroke="#555" strokeWidth="2.2" />
        </svg>
      </div>
      <div className="ml-auto mr-[16px] mt-[19px]">
        <Gear size={17} color="#6c6c6c" hole="#f1f1f1" />
      </div>
    </div>
  );
}

export default function App() {
  return (
    <div className={`flex h-[1000px] w-[1600px] flex-col overflow-hidden bg-white ${FONT}`}>
      <TitleBar />
      <Ribbon />
      <div className="relative flex min-h-0 flex-1 flex-col justify-between overflow-hidden">
        <Scene />
        <Browser />
        <div className="relative flex items-end pb-[4.5px] pl-[5px]">
          <PanelHeader title="COMMENTS" plus tracking="tracking-[-0.45px]" />
          <div className="mb-[2.5px] ml-[331px]">
            <NavBar />
          </div>
          <svg className="mb-[1.5px] ml-auto mr-[14px]" width="18" height="18" viewBox="0 0 18 18">
            <path d="M9 0A9 9 0 0 1 18 9V18H9A9 9 0 0 1 9 0z" fill="#000" />
            <path d="M4 11.2L8.5 7.2L13 6.2M5.2 12.2L9 9.6L13.3 8.6M9 12L12.6 10.8" fill="none" stroke="#eee" strokeWidth="1.2" />
          </svg>
        </div>
      </div>
      <Timeline />
    </div>
  );
}
